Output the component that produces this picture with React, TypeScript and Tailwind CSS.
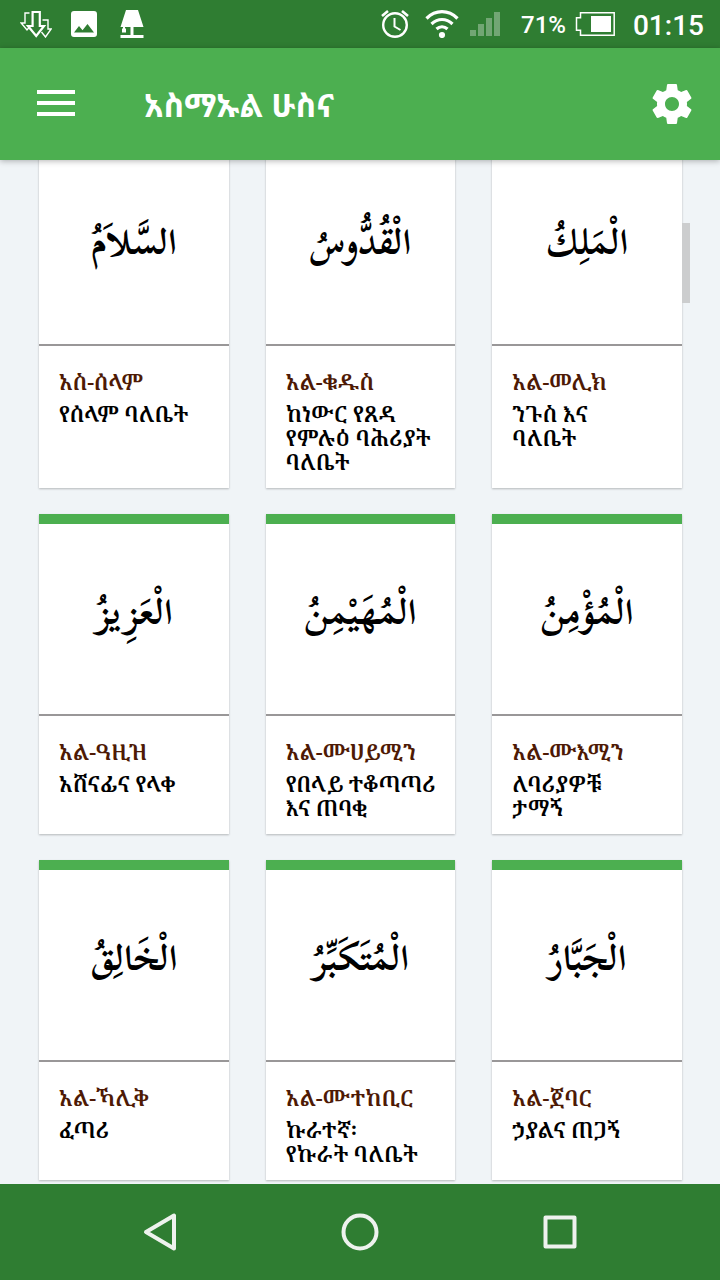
type Name = { arabic: string; title: string; meaning: string };

const names: Name[] = [
  { arabic: "السَّلاَمُ", title: "አስ-ሰላም", meaning: "የሰላም ባለቤት" },
  { arabic: "الْقُدُّوسُ", title: "አል-ቁዱስ", meaning: "ከነውር የጸዳ\nየምሉዕ ባሕሪያት\nባለቤት" },
  { arabic: "الْمَلِكُ", title: "አል-መሊክ", meaning: "ንጉስ እና\nባለቤት" },
  { arabic: "الْعَزِيزُ", title: "አል-ዓዚዝ", meaning: "አሸናፊና የላቀ" },
  { arabic: "الْمُهَيْمِنُ", title: "አል-ሙሀይሚን", meaning: "የበላይ ተቆጣጣሪ\nእና ጠባቂ" },
  { arabic: "الْمُؤْمِنُ", title: "አል-ሙእሚን", meaning: "ለባሪያዎቹ\nታማኝ" },
  { arabic: "الْخَالِقُ", title: "አል-ኻሊቅ", meaning: "ፈጣሪ" },
  { arabic: "الْمُتَكَبِّرُ", title: "አል-ሙተከቢር", meaning: "ኩራተኛ፡\nየኩራት ባለቤት" },
  { arabic: "الْجَبَّارُ", title: "አል-ጀባር", meaning: "ኃያልና ጠጋኝ" },
];

function StatusBar() {
  return (
    <div className="flex h-12 items-center justify-between bg-[#2f7d32] pl-5 pr-4 text-white">
      <div className="flex items-center">
        <svg className="h-7 w-8" viewBox="0 0 32 28" fill="none" stroke="currentColor">
          <path strokeWidth="1.400" d="M9.500 3H5v10H1.200L7 20l2.500-3M22.500 10H28v9h3.200L25.500 27l-4-5" />
          <path strokeWidth="2.200" d="M12.600 2h7.200v14h4.200L16.200 26 8 16h4.600z" />
        </svg>
        <svg className="ml-[19px] h-[26px] w-[26px]" viewBox="0 0 26 26" fill="currentColor">
          <path fillRule="evenodd" d="M3 0h20a3 3 0 0 1 3 3v20a3 3 0 0 1-3 3H3a3 3 0 0 1-3-3V3a3 3 0 0 1 3-3zm0 21.500h20L16.500 13l-5 6.300L8 15z" />
        </svg>
        <svg className="ml-[23px] h-7 w-6" viewBox="0 0 24 28" fill="currentColor">
          <path d="M6 0h12l5.500 17H13.500v8H23.500v3H.5v-3h10v-8H5v1.500h1v4H2v-4h1V17H.5z" />
        </svg>
      </div>
      <div className="flex items-center">
        <svg className="h-7 w-7" viewBox="0 0 28 28" fill="none" stroke="currentColor">
          <circle cx="14" cy="15" r="11.800" strokeWidth="2.400" />
          <path strokeWidth="2" d="M13.500 8v8.500l6 3.500" />
          <path strokeWidth="2.600" d="M1 6l6-5M27 6l-6-5" />
        </svg>
        <svg className="ml-4 h-7 w-[34px]" viewBox="0 0 34 28" fill="none" stroke="currentColor" strokeWidth="3.200">
          <path d="M1.500 8.500C10.500-.6 23.500-.6 32.500 8.500" />
          <path d="M6.500 14c6.300-6 14.700-6 21 0" />
          <path d="M11.500 19c3.300-3 7.700-3 11 0" />
          <circle cx="17" cy="25" r="3.100" fill="currentColor" stroke="none" />
        </svg>
        <svg className="ml-[11px] h-6 w-[30px]" viewBox="0 0 30 24" fill="#72a674">
          <path d="M0 18h6v6H0zM8 12h6v12H8zM16 6h6v18h-6zM24 0h6v24h-6z" />
        </svg>
        <span className="ml-[21px] pt-0.5 text-2xl font-medium">71%</span>
        <svg className="ml-[9px] h-6 w-10" viewBox="0 0 40 24" fill="none" stroke="currentColor">
          <path strokeWidth="1.500" d="M5.500.8h33.700v22.400H5.500v-5h-4V5.800h4z" />
          <path fill="currentColor" stroke="none" d="M16 4h20v16H16z" />
        </svg>
        <span className="ml-[18px] pt-1 text-[28px] leading-8 font-medium">01:15</span>
      </div>
    </div>
  );
}

function AppBar() {
  return (
    <header className="relative z-10 flex h-28 items-center bg-[#4caf50] pl-[37px] pr-6 text-white shadow-[0_1px_6px_rgba(0,0,0,0.3)]">
      <button type="button" aria-label="Menu" className="pb-0.5">
        <svg className="h-[26px] w-[38px]" viewBox="0 0 38 26" fill="currentColor">
          <path d="M0 0h38v4H0zM0 11h38v4H0zM0 22h38v4H0z" />
        </svg>
      </button>
      <h1 className="ml-[69px] flex-1 pt-0.5 text-[32px] leading-10 font-bold [font-family:'Noto_Sans_Ethiopic',Roboto,sans-serif]">አስማኡል ሁስና</h1>
      <button type="button" aria-label="Settings">
        <svg className="h-12 w-12" viewBox="0 0 24 24" fill="currentColor">
          <path d="M19.430 12.980c.04-.32.07-.64.07-.98s-.03-.66-.07-.98l2.110-1.650c.19-.15.24-.42.12-.64l-2-3.460c-.12-.22-.39-.3-.61-.22l-2.490 1c-.52-.4-1.080-.73-1.690-.98l-.38-2.650C14.460 2.180 14.250 2 14 2h-4c-.25 0-.46.18-.49.42l-.38 2.650c-.61.25-1.170.59-1.690.98l-2.490-1c-.23-.09-.49 0-.61.22l-2 3.460c-.13.22-.07.49.12.64l2.110 1.650c-.04.32-.07.65-.07.98s.03.66.07.98l-2.110 1.650c-.19.15-.24.42-.12.64l2 3.460c.12.22.39.3.61.22l2.490-1c.52.4 1.080.73 1.690.98l.38 2.650c.03.24.24.42.49.42h4c.25 0 .46-.18.49-.42l.38-2.650c.61-.25 1.170-.59 1.690-.98l2.490 1c.23.09.49 0 .61-.22l2-3.460c.12-.22.07-.49-.12-.64l-2.110-1.650zM12 15.500c-1.930 0-3.500-1.570-3.500-3.500s1.570-3.500 3.500-3.500 3.500 1.570 3.500 3.500-1.570 3.500-3.500 3.500z" />
        </svg>
      </button>
    </header>
  );
}

function NameCard({ arabic, title, meaning }: Name) {
  return (
    <article className="border-t-[10px] border-[#4caf50] bg-white shadow-[0_1px_2px_rgba(0,0,0,0.25)]">
      <div className="flex h-48 items-center justify-center border-b-2 border-[#999798] pb-3">
        <p
          lang="ar"
          dir="rtl"
          className="text-[36px] leading-none font-bold whitespace-nowrap text-black [font-family:'Scheherazade_New',Scheherazade,'Noto_Naskh_Arabic',Amiri,serif]"
        >
          {arabic}
        </p>
      </div>
      <div className="pt-[23px] pb-[15px] pl-5 text-[22px] leading-6 font-semibold [font-family:'Noto_Serif_Ethiopic','Liberation_Serif',serif]">
        <h2 className="mb-2 whitespace-nowrap text-[#4e1a05]">{title}</h2>
        <p className="whitespace-pre text-black">{meaning}</p>
      </div>
    </article>
  );
}

function NavigationBar() {
  return (
    <nav className="grid h-24 grid-cols-3 bg-[#2f7d32] px-[60px] text-[#eef2ee]">
      <button type="button" aria-label="Back" className="flex items-center justify-center">
        <svg className="h-10 w-10" viewBox="0 0 40 40" fill="none" stroke="currentColor" strokeWidth="4" strokeLinejoin="round">
          <path d="M34 3.500v33L6 20z" />
        </svg>
      </button>
      <button type="button" aria-label="Home" className="flex items-center justify-center">
        <svg className="h-10 w-10" viewBox="0 0 40 40" fill="none" stroke="currentColor" strokeWidth="4">
          <circle cx="20" cy="20" r="16.500" />
        </svg>
      </button>
      <button type="button" aria-label="Recent apps" className="flex items-center justify-center">
        <svg className="h-10 w-10" viewBox="0 0 40 40" fill="none" stroke="currentColor" strokeWidth="4" strokeLinejoin="round">
          <path d="M5.500 5.500h29v29h-29z" />
        </svg>
      </button>
    </nav>
  );
}

export default function App() {
  return (
    <div className="flex h-screen flex-col overflow-hidden bg-[#f0f4f7] [font-family:Roboto,sans-serif]">
      <StatusBar />
      <AppBar />
      <main className="relative min-h-0 flex-1 overflow-hidden">
        <div className="-mt-4 grid grid-cols-3 gap-x-[37px] gap-y-[26px] pr-[38px] pl-[39px]">
          {names.map((name) => (
            <NameCard key={name.title} {...name} />
          ))}
        </div>
        <div className="absolute top-[63px] right-[30px] h-20 w-2 bg-[#cccdce]" />
      </main>
      <NavigationBar />
    </div>
  );
}
